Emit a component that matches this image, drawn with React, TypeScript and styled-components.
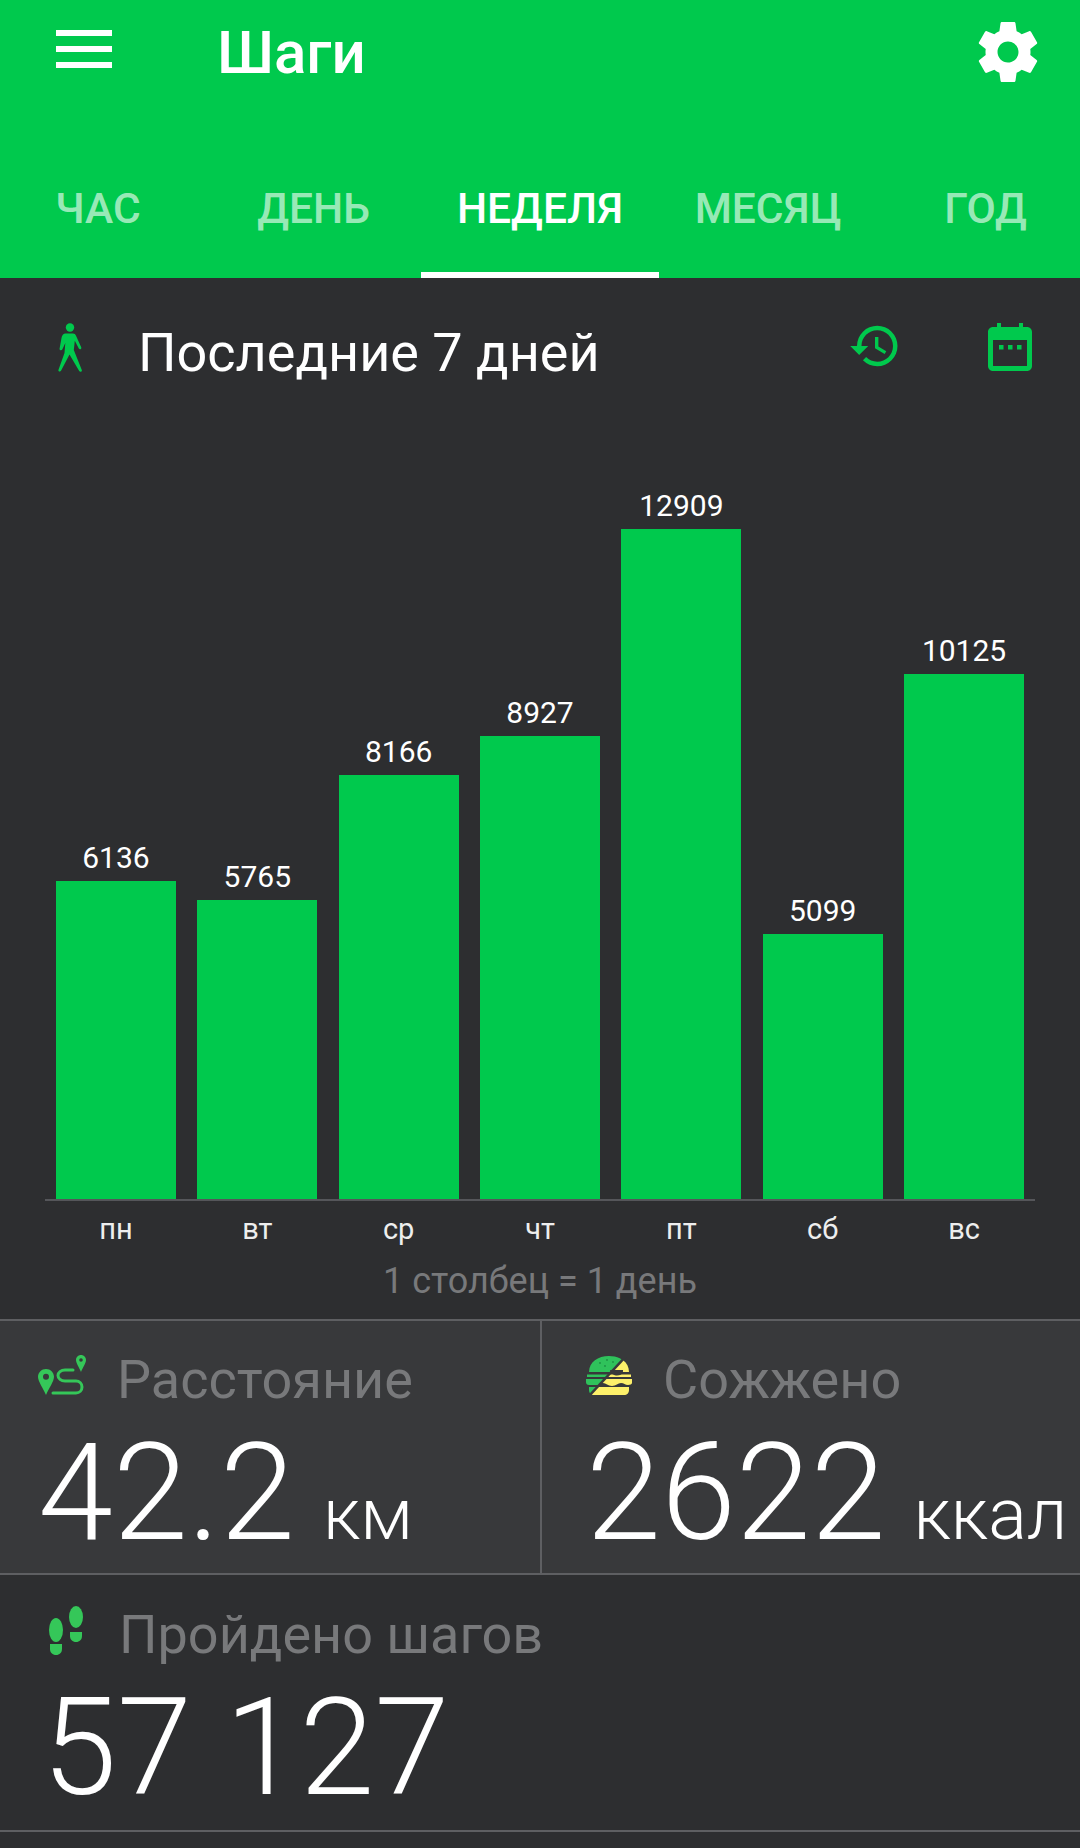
import React from 'react';
import styled, { createGlobalStyle } from 'styled-components';

const GREEN = '#00c94d';
const ICON_GREEN = '#35c759';

const GlobalStyle = createGlobalStyle`
  html, body {
    margin: 0;
    padding: 0;
    background: #2d2e30;
  }
  * {
    box-sizing: border-box;
  }
`;

const Page = styled.div`
  width: 1080px;
  height: 1848px;
  overflow: hidden;
  background: #2d2e30;
  font-family: Roboto, 'Noto Sans', sans-serif;
  color: #fff;
`;

const Header = styled.header`
  background: ${GREEN};
  height: 278px;
  display: flex;
  flex-direction: column;
`;

const TopBar = styled.div`
  height: 150px;
  display: flex;
  align-items: flex-start;
  padding: 16px 36px 0 56px;
`;

const Burger = styled.div`
  width: 56px;
  height: 38px;
  margin-top: 14px;
  display: flex;
  flex-direction: column;
  justify-content: space-between;
  span {
    display: block;
    height: 6px;
    background: #fff;
  }
`;

const Title = styled.h1`
  margin: 4px 0 0 105px;
  flex: 1;
  font-size: 60px;
  line-height: 66px;
  font-weight: 500;
`;

const Tabs = styled.nav`
  flex: 1;
  display: grid;
  grid-template-columns: 196px 225px 238px 218px 203px;
`;

const Tab = styled.div<{ $active?: boolean; $shift?: number }>`
  display: flex;
  justify-content: center;
  padding: 35px 0 0 ${(p) => p.$shift ?? 0}px;
  font-size: 42.5px;
  line-height: 48px;
  font-weight: 500;
  color: ${(p) => (p.$active ? '#fff' : 'rgba(255, 255, 255, 0.62)')};
  border-bottom: 6px solid ${(p) => (p.$active ? '#fff' : 'transparent')};
`;

const SectionBar = styled.div`
  height: 136px;
  display: flex;
  align-items: flex-start;
  padding: 41px 48px 0 56px;
`;

const SectionIcon = styled.div<{ $top?: number; $left?: number }>`
  display: flex;
  margin-top: ${(p) => p.$top ?? 0}px;
  margin-left: ${(p) => p.$left ?? 0}px;
`;

const SectionTitle = styled.h2`
  margin: 4px 0 0 56px;
  flex: 1;
  font-size: 54px;
  line-height: 60px;
  font-weight: 400;
`;

const Chart = styled.section`
  height: 787px;
  margin: 0 45px;
  padding: 0 11px;
  border-bottom: 2px solid #55565a;
  display: flex;
  align-items: flex-end;
  gap: 21.4px;
`;

const BarColumn = styled.div`
  width: 120px;
  display: flex;
  flex-direction: column;
  align-items: center;
`;

const BarValue = styled.span`
  font-size: 30px;
  line-height: 34px;
  margin-bottom: 6px;
`;

const Bar = styled.div`
  width: 100%;
  background: ${GREEN};
`;

const DayRow = styled.div`
  display: flex;
  gap: 21.4px;
  padding: 10px 56px 0;
`;

const Day = styled.span`
  width: 120px;
  text-align: center;
  font-size: 29px;
  line-height: 36px;
  color: #eee;
`;

const Caption = styled.div`
  text-align: center;
  font-size: 36px;
  line-height: 38px;
  margin-top: 15px;
  color: #78797b;
  height: 57px;
`;

const StatRow = styled.div`
  display: flex;
  border-top: 2px solid #5e5f62;
  background: #38393b;
  height: 254px;
`;

const StatCell = styled.div<{ $divider?: boolean }>`
  flex: ${(p) => (p.$divider ? '1' : '0 0 540px')};
  min-width: 0;
  border-left: ${(p) => (p.$divider ? '2px solid #5e5f62' : 'none')};
  padding: ${(p) => (p.$divider ? '27px 0 0 44px' : '27px 0 0 38px')};
`;

const StepsRow = styled.div`
  border-top: 2px solid #5e5f62;
  border-bottom: 2px solid #5e5f62;
  height: 259px;
  padding: 28px 0 0 42px;
`;

const StatLabelRow = styled.div<{ $gap: number; $indent?: number }>`
  display: flex;
  align-items: center;
  height: 64px;
  gap: ${(p) => p.$gap}px;
  padding-left: ${(p) => p.$indent ?? 0}px;
`;

const StatIcon = styled.div`
  display: flex;
  margin-bottom: 10px;
`;

const StatLabel = styled.span`
  font-size: 54px;
  line-height: 64px;
  color: #78797b;
`;

const StatValueRow = styled.div`
  display: flex;
  align-items: baseline;
  margin-top: 6px;
  white-space: nowrap;
`;

const StatValue = styled.span`
  font-size: 135px;
  line-height: 150px;
  font-weight: 300;
`;

const StatUnit = styled.span`
  font-size: 72px;
  font-weight: 300;
  margin-left: 28px;
`;

const bars = [
  { day: 'пн', value: 6136 },
  { day: 'вт', value: 5765 },
  { day: 'ср', value: 8166 },
  { day: 'чт', value: 8927 },
  { day: 'пт', value: 12909 },
  { day: 'сб', value: 5099 },
  { day: 'вс', value: 10125 },
];

const PX_PER_STEP = 670 / 12909;

const GearIcon = () => (
  <svg width="72" height="72" viewBox="0 0 24 24" fill="#fff">
    <path d="M19.43 12.98c.04-.32.07-.64.07-.98s-.03-.66-.07-.98l2.11-1.65c.19-.15.24-.42.12-.64l-2-3.46c-.12-.22-.39-.3-.61-.22l-2.49 1c-.52-.4-1.08-.73-1.69-.98l-.38-2.65C14.46 2.18 14.25 2 14 2h-4c-.25 0-.46.18-.49.42l-.38 2.65c-.61.25-1.17.59-1.69.98l-2.49-1c-.23-.09-.49 0-.61.22l-2 3.46c-.13.22-.07.49.12.64l2.11 1.65c-.04.32-.07.65-.07.98s.03.66.07.98l-2.11 1.65c-.19.15-.24.42-.12.64l2 3.46c.12.22.39.3.61.22l2.49-1c.52.4 1.08.73 1.69.98l.38 2.65c.03.24.24.42.49.42h4c.25 0 .46-.18.49-.42l.38-2.65c.61-.25 1.17-.59 1.69-.98l2.49 1c.23.09.49 0 .61-.22l2-3.46c.12-.22.07-.49-.12-.64l-2.11-1.65zM12 15.5c-1.93 0-3.5-1.57-3.5-3.5s1.57-3.5 3.5-3.5 3.5 1.57 3.5 3.5-1.57 3.5-3.5 3.5z" />
  </svg>
);

const WalkIcon = () => (
  <svg width="26" height="50" viewBox="0 0 26 50" fill={GREEN}>
    <circle cx="14" cy="4.5" r="4.2" />
    <path d="M9.5 10.5h7.500c1.400 0 2.400.7 2.900 2l5.300 11.800c.7 1.600-1.600 2.700-2.400 1.100l-4-7.600-1 9.200 8 20c.6 1.600-1.800 2.600-2.600 1L13.500 31.500 5 47.800c-.8 1.600-3.200.6-2.500-1L8.500 30l.8-10-3 6.500C5.600 28 3.200 27.300 3.600 25.600L5.500 15c.4-2.500 1.900-4.500 4-4.500z" />
  </svg>
);

const HistoryIcon = () => (
  <svg width="54" height="54" viewBox="0 0 24 24" fill={GREEN}>
    <path d="M13 3a9 9 0 0 0-9 9H1l3.89 3.89.07.14L9 12H6c0-3.87 3.13-7 7-7s7 3.13 7 7-3.13 7-7 7c-1.93 0-3.68-.79-4.94-2.06l-1.42 1.42A8.954 8.954 0 0 0 13 21a9 9 0 0 0 0-18zm-1 5v5l4.28 2.54.72-1.21-3.5-2.08V8H12z" />
  </svg>
);

const CalendarIcon = () => (
  <svg width="44" height="48" viewBox="0 0 44 48" fill={GREEN}>
    <path d="M9 0h4v4h18V0h4v4h4c2.800 0 5 2.200 5 5v34c0 2.800-2.200 5-5 5H5c-2.800 0-5-2.200-5-5V9c0-2.800 2.200-5 5-5h4V0zM5 17v26h34V17H5z" />
    <rect x="11" y="22" width="4.5" height="4.5" />
    <rect x="20" y="22" width="4.5" height="4.5" />
    <rect x="29" y="22" width="4.5" height="4.5" />
  </svg>
);

const RouteIcon = () => (
  <svg width="48" height="42" viewBox="0 0 48 42" fill="none">
    <path
      fill={ICON_GREEN}
      fillRule="evenodd"
      d="M8 15c-4.400 0-8 3.500-8 7.800C0 27.500 5.200 34.500 8 41c2.800-6.500 8-13.500 8-18.200C16 18.500 12.400 15 8 15zm0 4.800a3 3 0 1 1 0 6 3 3 0 0 1 0-6z"
    />
    <path
      fill={ICON_GREEN}
      fillRule="evenodd"
      d="M43 1c-2.800 0-5 2.200-5 5 0 3 3.200 7.500 5 12 1.800-4.500 5-9 5-12 0-2.800-2.200-5-5-5zm0 3.200a1.800 1.800 0 1 1 0 3.600 1.800 1.800 0 0 1 0-3.600z"
    />
    <path
      stroke={ICON_GREEN}
      strokeWidth="3"
      strokeLinecap="round"
      d="M35 16H27c-4 0-7 2.500-7 5.500s3 5.500 7 5.500h11c3.500 0 6 2.500 6 6s-2.500 6-6 6H15"
    />
  </svg>
);

const BurgerIcon = () => (
  <svg width="46" height="40" viewBox="0 0 46 40">
    <defs>
      <clipPath id="burger-top">
        <polygon points="0,0 41,0 4,40 0,40" />
      </clipPath>
      <clipPath id="burger-bottom">
        <polygon points="41,0 46,0 46,40 4,40" />
      </clipPath>
    </defs>
    <g clipPath="url(#burger-top)" fill="#2fc25b">
      <path d="M3 17C3 7 12 1 23 1s20 6 20 16H3z" />
      <rect x="1" y="19.5" width="44" height="2.5" />
      <path d="M0 24h46v3c0 2-1 3-3 3H3c-2 0-3-1-3-3v-3z" />
      <path d="M3 32h40v3c0 3-2 5-5 5H8c-3 0-5-2-5-5v-3z" />
    </g>
    <g clipPath="url(#burger-bottom)" fill="#fdf06a">
      <path d="M3 17C3 7 12 1 23 1s20 6 20 16H3z" />
      <rect x="1" y="19.5" width="44" height="2.5" />
      <path d="M0 24h46v4c0 1-2 2-4 2-3 0-4-2-7-2s-5 3-9 3-6-3-9-3H0v-4z" />
      <path d="M3 32h40v3c0 3-2 5-5 5H8c-3 0-5-2-5-5v-3z" />
    </g>
    <path d="M42 -1 3 41" stroke="#38393b" strokeWidth="2.5" />
    <path d="M24 15h13v1.500c-1 3-3 4-6 4s-6-2-7-5.500z" fill="#38393b" />
    <g fill="#1c8f42">
      <circle cx="14" cy="8" r="0.9" />
      <circle cx="21" cy="5" r="0.9" />
      <circle cx="27" cy="7" r="0.9" />
      <circle cx="19" cy="11" r="0.9" />
    </g>
  </svg>
);

const StepsIcon = () => (
  <svg width="34" height="49" viewBox="0 0 34 49" fill={ICON_GREEN}>
    <ellipse cx="7" cy="24" rx="7" ry="12" />
    <path d="M1 38h12v5c0 3.500-2.500 6-6 6s-6-2.500-6-6v-5z" />
    <ellipse cx="27" cy="11" rx="7" ry="11" />
    <path d="M21 26h12v4c0 3.500-2.500 6-6 6s-6-2.500-6-6v-4z" />
  </svg>
);

export default function App() {
  return (
    <Page>
      <GlobalStyle />
      <Header>
        <TopBar>
          <Burger>
            <span />
            <span />
            <span />
          </Burger>
          <Title>Шаги</Title>
          <GearIcon />
        </TopBar>
        <Tabs>
          <Tab>ЧАС</Tab>
          <Tab $shift={10}>ДЕНЬ</Tab>
          <Tab $active>НЕДЕЛЯ</Tab>
          <Tab>МЕСЯЦ</Tab>
          <Tab $shift={14}>ГОД</Tab>
        </Tabs>
      </Header>
      <SectionBar>
        <SectionIcon $top={4}>
          <WalkIcon />
        </SectionIcon>
        <SectionTitle>Последние 7 дней</SectionTitle>
        <HistoryIcon />
        <SectionIcon $top={4} $left={86}>
          <CalendarIcon />
        </SectionIcon>
      </SectionBar>
      <Chart>
        {bars.map((b) => (
          <BarColumn key={b.day}>
            <BarValue>{b.value}</BarValue>
            <Bar style={{ height: b.value * PX_PER_STEP }} />
          </BarColumn>
        ))}
      </Chart>
      <DayRow>
        {bars.map((b) => (
          <Day key={b.day}>{b.day}</Day>
        ))}
      </DayRow>
      <Caption>1 столбец = 1 день</Caption>
      <StatRow>
        <StatCell>
          <StatLabelRow $gap={31}>
            <StatIcon>
              <RouteIcon />
            </StatIcon>
            <StatLabel>Расстояние</StatLabel>
          </StatLabelRow>
          <StatValueRow>
            <StatValue>42.2</StatValue>
            <StatUnit>км</StatUnit>
          </StatValueRow>
        </StatCell>
        <StatCell $divider>
          <StatLabelRow $gap={31}>
            <StatIcon>
              <BurgerIcon />
            </StatIcon>
            <StatLabel>Сожжено</StatLabel>
          </StatLabelRow>
          <StatValueRow>
            <StatValue>2622</StatValue>
            <StatUnit>ккал</StatUnit>
          </StatValueRow>
        </StatCell>
      </StatRow>
      <StepsRow>
        <StatLabelRow $gap={36} $indent={7}>
          <StatIcon>
            <StepsIcon />
          </StatIcon>
          <StatLabel>Пройдено шагов</StatLabel>
        </StatLabelRow>
        <StatValueRow>
          <StatValue>57 127</StatValue>
        </StatValueRow>
      </StepsRow>
    </Page>
  );
}
